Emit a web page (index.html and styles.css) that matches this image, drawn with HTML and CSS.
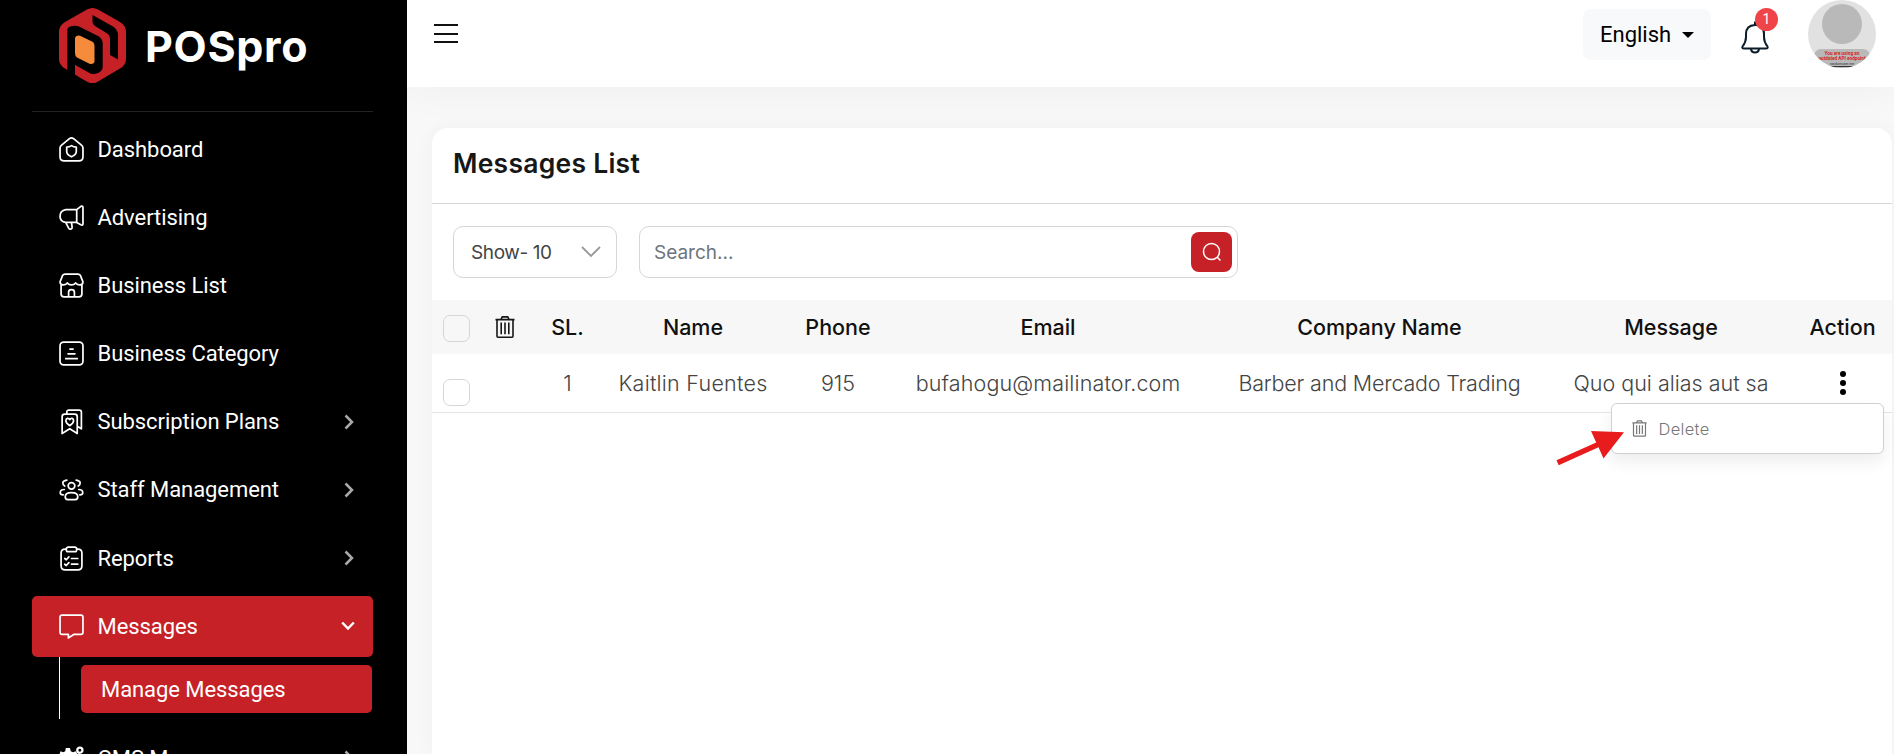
FILE: index.html
```html
<!DOCTYPE html>
<html lang="en">
<head>
<meta charset="utf-8">
<title>POSpro - Messages List</title>
<link rel="stylesheet" href="styles.css">
</head>
<body>
<svg class="defs" aria-hidden="true">
  <symbol id="trash" viewBox="0 0 20 22"><g fill="none" stroke="currentColor" stroke-width="1.6" stroke-linejoin="round"><path d="M.5 3.6h19M6 3.4 7.2.9h5.6L14 3.4M2 4v16.200c0 .6.4 1 1 1h14c.6 0 1-.4 1-1V4"/><path d="M6.200 6.500v11.800M10 6.500v11.800M13.800 6.500v11.800"/></g></symbol>
  <symbol id="chev" viewBox="0 0 10 16"><path d="M1.500 1.500 8 8l-6.500 6.500" fill="none" stroke="currentColor" stroke-width="2.500"/></symbol>
</svg>
<div class="app">
  <aside class="sidebar">
    <div class="brand">
      <svg class="mark" viewBox="0 0 67 75">
        <path fill="#c62127" d="M28 1.500q5.500-3 11 0l22 12.500q6 3.500 6 10v27q0 6-6 9.500L39 73.500q-5.500 3-11 0L6 60.500q-6-3.500-6-9.500V24q0-6.500 6-10Z"/>
        <path d="M8.300 75V22q0-4 6.700-4.300 3-.2 6 1.300l19 9.500q3.700 2.500 3.700 7.500v23q0 4-5.700 6.500-4 1.500-7 0L16 57v18Z"/>
        <path fill="#c62127" d="M16 57l15 8.500q3 1.500 7 0l3 6.500-4 2.500q-4 1.500-8-.5L20 69q-4-2.500-4-6Z"/>
        <path d="M33.500 7 54 18.500q5 3.500 5 8.500v24.500L51 47V31q0-4-3.500-6L36 18q-2.500-2-2.500-4Z"/>
        <path fill="#f78b3c" d="M16 30q1-3 5-2.300L34 34q1.500 1.500 1.500 4v16q-1.500 3-5.500 1.500l-12-6q-2-1.500-2-4.500Z"/>
      </svg>
      <span>POSpro</span>
    </div>
    <nav class="nav">
      <a class="item"><svg viewBox="0 0 24 24"><path d="M1 10.500q0-1.500 1.200-2.500L10 1.600q2-1.300 4 0L21.800 8Q23 9 23 10.500V19q0 4-4 4H5q-4 0-4-4Z"/><path d="M12 8.300q2 1.400 4.600 1.400V14c0 3-2.600 4.200-4.600 5-2-.8-4.600-2-4.600-5V9.700Q10 9.700 12 8.300Z"/></svg><span>Dashboard</span></a>
      <a class="item"><svg viewBox="0 0 24 24"><path d="M17 4.500v12.200l4 2.300q2 .8 2-1V2.500q0-2-2-1.200L17 4.500H6.500Q1 5.500 1 10.700t5.500 6H17M6.500 17l2.800 5.200q.7 1.200 2 1 1.500-.4 1.300-2L12 17"/></svg><span>Advertising</span></a>
      <a class="item"><svg viewBox="0 0 24 24"><path d="M2 11.500V20q0 3 3 3h14q3 0 3-3v-8.500M3.200 3q.6-2 2.800-2h12q2.200 0 2.800 2L23 8.500Q23 11.500 20 11.500q-2.500 0-4-2-1.500 2-4 2t-4-2q-1.500 2-4 2-3 0-3-3ZM9.200 23v-4.500q0-2.500 2.800-2.500t2.800 2.500V23"/></svg><span>Business List</span></a>
      <a class="item"><svg viewBox="0 0 24 24"><rect x="1" y="1" width="22" height="22" rx="3.500"/><path d="M10.500 7.700h3M8.700 12.300h6.600M6.500 17h11"/></svg><span>Business Category</span></a>
      <a class="item"><svg viewBox="0 0 24 24"><path d="M3 7.500q0-2.500 2.500-2.500H15q2.500 0 2.500 2.500V23.500l-7.200-4.500L3 23.500ZM7.500 5V3q0-2 2-2H19.500q2 0 2 2v16l-4-2.500M10.300 16c-2-1.500-3.700-2.700-3.700-4.800 0-2.500 2.700-2.800 3.700-1 1-1.800 3.700-1.500 3.700 1 0 2.100-1.700 3.300-3.700 4.800Z"/></svg><span>Subscription Plans</span><svg class="arr"><use href="#chev"/></svg></a>
      <a class="item"><svg viewBox="0 0 24 24"><circle cx="12" cy="8.500" r="3.200"/><path d="M8.500 21.800q-2.500 0-2.500-2.800 0-4 6-4t6 4q0 2.800-2.500 2.800ZM5.500 8.700Q3.500 7.500 3.700 5.500T7.500 3M18.500 8.700q2-1.200 1.800-3.200T16.500 3M4 17.200Q1.200 17 1.200 15q0-3 3.800-3M20 17.200q2.800-.2 2.800-2.200 0-3-3.800-3"/></svg><span>Staff Management</span><svg class="arr"><use href="#chev"/></svg></a>
      <a class="item"><svg viewBox="0 0 24 24"><path d="M7 3H6Q2 3 2 7v12q0 4 4 4h12q4 0 4-4V7q0-4-4-4h-1"/><rect x="7" y="1" width="10" height="4.500" rx="2"/><path d="m5.500 12 1.500 1.200L9.500 10.500M12 12h6M5.500 17.500 7 18.700 9.500 16M12 17.500h6"/></svg><span>Reports</span><svg class="arr"><use href="#chev"/></svg></a>
      <a class="item active"><svg viewBox="0 0 24 24"><path d="M3 1h18q2 0 2 2v14.500q0 2-2 2h-6.500L9 23v-3.500H3q-2 0-2-2V3q0-2 2-2Z"/></svg><span>Messages</span><svg class="arr down" viewBox="0 0 14 10"><path d="m1.200 1.500 5.800 6 5.800-6"/></svg></a>
      <div class="sub"><a>Manage Messages</a></div>
      <a class="item"><svg viewBox="0 0 24 24"><path fill="#fff" stroke="none" d="M6.500 2h4l.8 3 2.200 1 2.500-1 2.500 4-2 2v3l2 2-2.500 4H1l-1-4 2-2v-3l-2-2 1.500-4 2.500 1L6 5Z"/><circle cx="20" cy="4" r="2.500" stroke-width="2.200"/></svg><span>CMS Manage</span><svg class="arr"><use href="#chev"/></svg></a>
    </nav>
  </aside>
  <div class="content">
    <header class="topbar">
      <svg class="burger" viewBox="0 0 26 20"><path d="M1 1h24M1 10h24M1 18h24"/></svg>
      <div class="tools">
        <div class="lang">English<i class="caret"></i></div>
        <div class="bell">
          <svg viewBox="0 0 30 34"><path d="M2.500 26.500Q6 22 6 17v-3Q6 5.500 15 5t9 9v3q0 5 3.500 9.500.8 2-1.500 2H4q-2.300 0-1.500-2ZM11 29q.5 3.500 4 3.500t4-3.500M15 5V1.500"/></svg>
          <b class="badge">1</b>
        </div>
        <div class="avatar"><i class="head"></i><div class="notice"><b>You are using an<br>outdated API endpoint</b><span>randomuser.me</span></div></div>
      </div>
    </header>
    <main class="card">
      <h1><span>Messages List</span></h1>
      <div class="filters">
        <div class="select"><span>Show- 10</span><svg viewBox="0 0 20 12"><path d="m1 1 9 9 9-9"/></svg></div>
        <div class="search"><span>Search...</span><button><svg viewBox="0 0 20 20"><circle cx="9.500" cy="9.500" r="8"/><path d="m15 15 3.500 3.500"/></svg></button></div>
      </div>
      <div class="row head-row">
        <i class="check"></i><svg class="bin"><use href="#trash"/></svg><span>SL.</span><span>Name</span><span>Phone</span><span>Email</span><span>Company Name</span><span>Message</span><span>Action</span>
      </div>
      <div class="row body-row">
        <i class="check"></i><span></span><span>1</span><span class="c-name">Kaitlin Fuentes</span><span>915</span><span class="c-mail">bufahogu@mailinator.com</span><span class="c-comp">Barber and Mercado Trading</span><span>Quo qui alias aut sa</span>
        <div class="action">
          <svg class="dots" viewBox="0 0 6 24"><circle cx="3" cy="3" r="3"/><circle cx="3" cy="12" r="3"/><circle cx="3" cy="21" r="3"/></svg>
          <div class="menu"><svg><use href="#trash"/></svg><span>Delete</span></div>
        </div>
      </div>
    </main>
  </div>
</div>
<svg class="pointer" viewBox="0 0 70 36"><path fill="#e81c1c" d="M69 2.300 36 1l5.200 11.500L1.500 30.300l2.200 5L43.500 17.200l5 11.300Z"/></svg>
</body>
</html>
```
FILE: styles.css
```css
* { box-sizing: border-box; }
body { margin: 0; height: 754px; overflow: hidden; background: #f8f8f8; font-family: Inter, "Liberation Sans", sans-serif; color: #444; }
.defs { position: absolute; width: 0; height: 0; }
.app { display: flex; height: 754px; }

/* Sidebar */
.sidebar { width: 407px; height: 754px; flex: none; overflow: hidden; background: #000; padding: 0 34px 0 32px; color: #fff; font-family: Roboto, sans-serif; }
.brand { height: 112px; border-bottom: 1px solid #222; padding: 8px 0 0 27px; display: flex; align-items: flex-start; gap: 19px; }
.mark { width: 67px; height: 75px; }
.brand span { font: 700 43px/76px Inter, sans-serif; letter-spacing: .7px; }
.nav { padding-top: 6.500px; }
.item { display: flex; align-items: center; height: 61px; margin-bottom: 7.200px; padding: 0 18px 0 27px; border-radius: 5px; font-size: 22px; letter-spacing: -.07px; }
.item > svg { width: 25px; height: 25px; margin-right: 13.500px; fill: none; stroke: #fff; stroke-width: 1.650; stroke-linejoin: round; stroke-linecap: round; overflow: visible; }
.item span { flex: 1; white-space: nowrap; }
.item > .arr { width: 9px; height: 14px; margin: 0 2px 0 0; color: #aaa; stroke-linecap: butt; stroke-linejoin: miter; }
.item > .arr:not(.down) { width: 10px; height: 16px; margin-right: 1px; }
.active { background: #c62127; margin-bottom: 0; }
.item > .down { width: 14px; height: 10px; margin: 0; color: #fff; stroke-width: 2.500; }
.sub { margin: 0 1px 9px 27px; height: 62px; padding: 8px 0 6px 21px; border-left: 1px solid #fff; }
.sub a { display: block; height: 48px; border-radius: 5px; background: #c62127; padding-left: 20px; font-size: 22px; line-height: 49px; letter-spacing: -.07px; }

/* Top bar */
.content { flex: 1; display: flex; flex-direction: column; }
.topbar { height: 87px; flex: none; background: #fff; box-shadow: 0 4px 40px rgba(0, 20, 10, .04); display: flex; justify-content: space-between; align-items: flex-start; padding: 0 18px 0 26px; }
.burger { width: 26px; height: 20px; margin-top: 24px; fill: none; stroke: #111; stroke-width: 2; }
.tools { display: flex; align-items: flex-start; }
.lang { width: 128px; height: 51px; margin: 9px 29px 0 0; border-radius: 8px; background: #f8f9fb; color: #000; font: 22px/51px Roboto, sans-serif; padding: 0 17px 0 17px; display: flex; justify-content: space-between; align-items: center; }
.caret { border: 6px solid transparent; border-top-color: #000; border-bottom: 0; }
.bell { position: relative; width: 30px; height: 34px; margin: 20px 38px 0 0; }
.bell svg { width: 30px; height: 34px; fill: none; stroke: #0b1c2a; stroke-width: 2; }
.badge { position: absolute; left: 15px; top: -12px; width: 23px; height: 23px; border-radius: 50%; background: #ef4548; color: #fff; font: 14px/23px Roboto, sans-serif; text-align: center; }
.avatar { width: 68px; height: 68px; border-radius: 50%; overflow: hidden; background: #e1e1e1; display: flex; flex-direction: column; align-items: center; padding-top: 4px; }
.head { width: 40px; height: 40px; flex: none; border-radius: 50%; background: #b9b9b9; }
.notice { width: 56px; height: 24px; margin-top: 5px; border-radius: 7px; background: #b9b9b9; font: 4.700px/5px Roboto, sans-serif; display: flex; flex-direction: column; align-items: center; padding-top: 1.500px; white-space: nowrap; text-align: center; color: #333; }
.notice b { color: #d81c24; }
.notice span { font-size: 3.500px; margin-top: 1px; text-decoration: underline; }

/* Messages card */
.card { width: 1460px; flex: 1; margin: 41px 0 0 25px; border-radius: 16px 16px 0 0; background: #fff; box-shadow: 0 0 20px rgba(0, 20, 10, .04); z-index: 1; }
h1 { margin: 0; height: 76px; border-bottom: 1px solid #d6d6d6; padding-left: 21px; color: #171717; font-size: 26.500px; font-weight: 600; line-height: 70px; letter-spacing: .25px; }
.filters { display: flex; gap: 22px; padding: 22px 21px; height: 96px; font-size: 19px; }
.select, .search { height: 52px; border: 1px solid #d6d6d6; border-radius: 10px; display: flex; align-items: center; justify-content: space-between; }
.select { width: 164px; padding: 0 15px 0 17px; letter-spacing: -.4px; }
.select svg { width: 20px; height: 12px; fill: none; stroke: #999; stroke-width: 1.800; }
.search { width: 599px; padding: 0 5px 0 14px; color: #6c757d; }
.search button { width: 41px; height: 40px; padding: 0; border: 0; border-radius: 8px; background: #c62127; display: grid; place-items: center; }
.search svg { width: 20px; height: 20px; fill: none; stroke: #fff; stroke-width: 1.500; }

.row { display: grid; grid-template-columns: 49px 48px 74px 180px 110px 310px 353px 230px 106px; align-items: center; text-align: center; font-size: 21.500px; white-space: nowrap; }
.row > * { justify-self: center; }
.row > :nth-child(3) { margin-left: 3px; }
.row > :last-child { margin-left: 7px; }
.head-row { height: 54px; background: #f7f7f7; color: #111; font-weight: 500; }
.check { width: 27px; height: 27px; border: 1px solid #d6d6d6; border-radius: 7px; margin-top: 3px; }
.bin { width: 20px; height: 22px; color: #171717; }
.body-row { height: 59px; border-bottom: 1px solid #e4e4e4; font-weight: 300; }
.body-row .check { margin-top: 18px; }
.c-name { letter-spacing: .25px; }
.c-mail { letter-spacing: .14px; }
.c-comp { letter-spacing: -.18px; }
.action { position: relative; height: 24px; display: flex; }
.dots { width: 6px; height: 24px; }
.menu { position: absolute; right: -38px; top: 32px; width: 273px; height: 51px; border: 1px solid #d0d0d0; border-radius: 6px; background: #fff; box-shadow: 0 8px 16px rgba(0, 0, 0, .07); display: flex; align-items: center; gap: 12px; padding-left: 20px; color: #777; font-size: 16.500px; letter-spacing: .3px; }
.menu svg { width: 15px; height: 17px; }
.menu svg use { transform: scale(1); }
.pointer { position: absolute; left: 1555px; top: 430px; width: 70px; height: 36px; z-index: 3; }
```
